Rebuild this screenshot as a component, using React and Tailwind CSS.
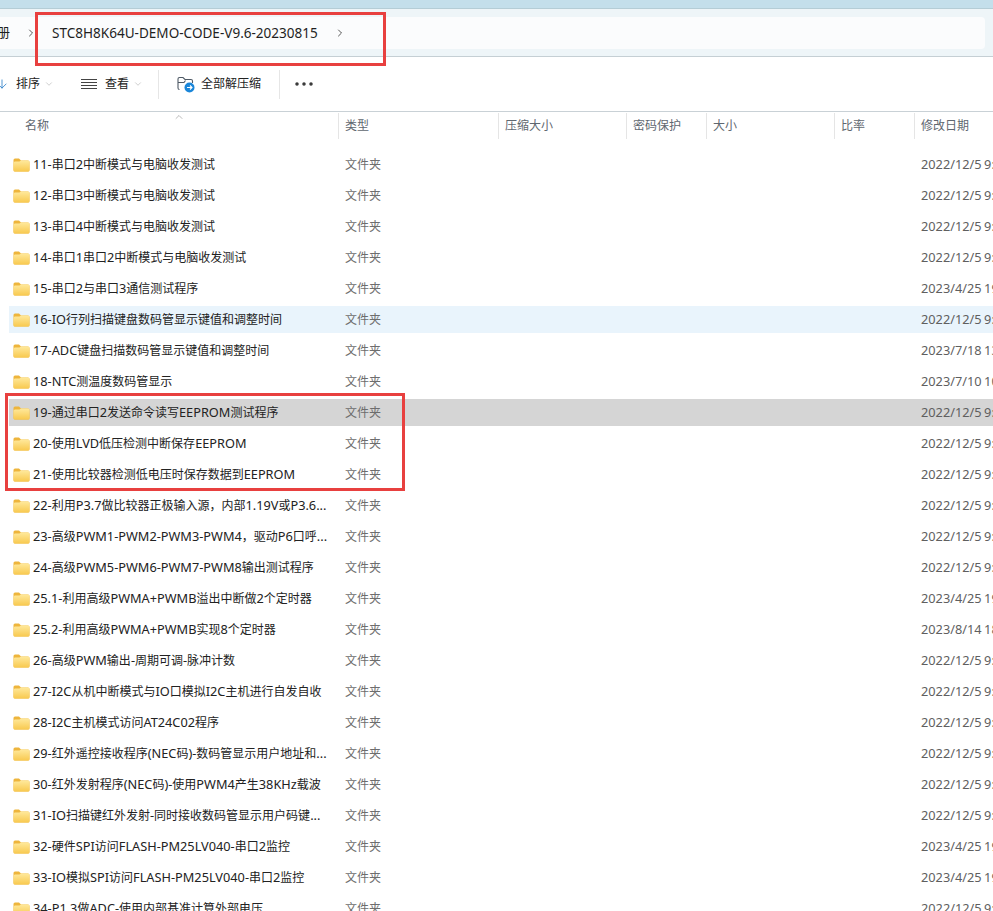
import React from 'react';
import { ChevronRight, ChevronDown, ChevronUp, ArrowDown, Ellipsis } from 'lucide-react';

const rows = [
    ['11-串口2中断模式与电脑收发测试', '2022/12/5 9:30'],
    ['12-串口3中断模式与电脑收发测试', '2022/12/5 9:30'],
    ['13-串口4中断模式与电脑收发测试', '2022/12/5 9:30'],
    ['14-串口1串口2中断模式与电脑收发测试', '2022/12/5 9:30'],
    ['15-串口2与串口3通信测试程序', '2023/4/25 19:20'],
    ['16-IO行列扫描键盘数码管显示键值和调整时间', '2022/12/5 9:30', 'hover'],
    ['17-ADC键盘扫描数码管显示键值和调整时间', '2023/7/18 13:10'],
    ['18-NTC测温度数码管显示', '2023/7/10 10:10'],
    ['19-通过串口2发送命令读写EEPROM测试程序', '2022/12/5 9:30', 'selected'],
    ['20-使用LVD低压检测中断保存EEPROM', '2022/12/5 9:30'],
    ['21-使用比较器检测低电压时保存数据到EEPROM', '2022/12/5 9:30'],
    ['22-利用P3.7做比较器正极输入源，内部1.19V或P3.6...', '2022/12/5 9:30'],
    ['23-高级PWM1-PWM2-PWM3-PWM4，驱动P6口呼...', '2022/12/5 9:30'],
    ['24-高级PWM5-PWM6-PWM7-PWM8输出测试程序', '2022/12/5 9:30'],
    ['25.1-利用高级PWMA+PWMB溢出中断做2个定时器', '2023/4/25 19:20'],
    ['25.2-利用高级PWMA+PWMB实现8个定时器', '2023/8/14 18:10'],
    ['26-高级PWM输出-周期可调-脉冲计数', '2022/12/5 9:30'],
    ['27-I2C从机中断模式与IO口模拟I2C主机进行自发自收', '2022/12/5 9:30'],
    ['28-I2C主机模式访问AT24C02程序', '2022/12/5 9:30'],
    ['29-红外遥控接收程序(NEC码)-数码管显示用户地址和...', '2022/12/5 9:30'],
    ['30-红外发射程序(NEC码)-使用PWM4产生38KHz载波', '2022/12/5 9:30'],
    ['31-IO扫描键红外发射-同时接收数码管显示用户码键...', '2022/12/5 9:30'],
    ['32-硬件SPI访问FLASH-PM25LV040-串口2监控', '2023/4/25 19:20'],
    ['33-IO模拟SPI访问FLASH-PM25LV040-串口2监控', '2023/4/25 19:20'],
    ['34-P1.3做ADC-使用内部基准计算外部电压', '2022/12/5 9:30'],
];

const columns = [
    ['类型', 'w-[160px]'],
    ['压缩大小', 'w-[128px]'],
    ['密码保护', 'w-[80px]'],
    ['大小', 'w-[128px]'],
    ['比率', 'w-[80px]'],
    ['修改日期', 'flex-1'],
];

const FolderIcon = () => (
    <svg width="17" height="14" viewBox="0 0 17 14" className="shrink-0">
        <defs>
            <linearGradient id="folderFront" x1="0" y1="0" x2="0" y2="1">
                <stop offset="0" stopColor="#ffe99c" />
                <stop offset="1" stopColor="#f8c94f" />
            </linearGradient>
        </defs>
        <path d="M0.5 2 Q0.5 0.5 2 0.5 H6 L8 2.5 H15 Q16.5 2.5 16.5 4 V12 Q16.5 13.5 15 13.5 H2 Q0.5 13.5 0.5 12 Z" fill="#eeb53c" />
        <path d="M0.5 5 Q0.5 3.5 2 3.5 H6.5 L8 2.5 H15 Q16.5 2.5 16.5 4 V12 Q16.5 13.5 15 13.5 H2 Q0.5 13.5 0.5 12 Z" fill="url(#folderFront)" />
    </svg>
);

const ExtractIcon = () => (
    <svg width="18" height="17" viewBox="0 0 18 17" fill="none" className="shrink-0">
        <path d="M2.5 13.5 Q1 13.5 1 12 V3 Q1 1.5 2.5 1.5 H6 L8 3.5 H14 Q15.5 3.5 15.5 5 V7" stroke="#4f5a66" strokeWidth="1.1" />
        <path d="M1 6.5 H7 L8.5 4.5" stroke="#4f5a66" strokeWidth="1.1" />
        <circle cx="12.5" cy="11.5" r="5" fill="#1a86d9" />
        <path d="M10 11.5 H15 M13 9.5 L15 11.5 L13 13.5" stroke="#fff" strokeWidth="1.1" />
    </svg>
);

const ListIcon = () => (
    <svg width="16" height="11" viewBox="0 0 16 11" fill="none" stroke="#444444" strokeWidth="1" className="shrink-0">
        <path d="M0 0.5 H16 M0 3.5 H16 M0 6.5 H16 M0 9.5 H16" />
    </svg>
);

// latin runs look a bit bigger than the chinese in the screenshot
const MixedText = ({ text }) => {
    const parts = text.match(/[\x00-\x7f]+|[^\x00-\x7f]+/g);
    return parts.map((part, i) => (
        /[\x00-\x7f]/.test(part[0])
            ? <span key={i} className="text-[12.75px]">{part}</span>
            : <span key={i}>{part}</span>
    ));
};

const Row = ({ name, date, state }) => {
    let bg = '';
    if (state === 'hover') bg = 'bg-[#e9f4fc]';
    if (state === 'selected') bg = 'bg-[#d5d5d5]';
    return (
        <div className={`flex h-[27px] items-center ${bg}`}>
            <div className="flex w-[336px] items-center gap-[3px] pl-1 shrink-0">
                <FolderIcon />
                <span className="whitespace-nowrap text-[#222222]"><MixedText text={name} /></span>
            </div>
            <span className="text-[#6d6d6d]">文件夹</span>
            <span className="ml-auto w-[72px] shrink-0 whitespace-nowrap overflow-hidden text-[12.75px] [word-spacing:-0.75px] text-[#5f5f5f]">{date}</span>
        </div>
    );
};

const App = () => {
    return (
        <div className="relative h-[911px] w-[993px] overflow-hidden bg-white font-['Noto_Sans','Noto_Sans_CJK_SC',sans-serif] text-xs">
            <div className="h-[9px] bg-[#c4dfeb] border-b border-[#b5cdd6]" />

            <div className="h-[48px] border-b border-[#c5cfd4] bg-[#eef5f8] pr-2 pt-2">
                <div className="flex h-8 items-center rounded-r bg-[#fbfcfd] text-[#1f1f1f]">
                    <span className="-ml-[3px] w-[13px] text-[13px] whitespace-nowrap">册</span>
                    <ChevronRight size={12} strokeWidth={1.5} className="ml-[15px] text-[#222222]" />
                    <span className="ml-[15px] text-[13.55px] whitespace-nowrap">STC8H8K64U-DEMO-CODE-V9.6-20230815</span>
                    <ChevronRight size={12} strokeWidth={1.5} className="ml-[16px] text-[#222222]" />
                </div>
            </div>

            <div className="flex h-[54px] items-center text-[#222222]">
                <ArrowDown size={14} strokeWidth={1.3} className="-ml-[5px] text-[#1a74c4]" />
                <span className="ml-[7px]">排序</span>
                <ChevronDown size={10} strokeWidth={1} className="ml-[4px] text-[#8a8a8a]" />
                <div className="ml-[27px]"><ListIcon /></div>
                <span className="ml-[8px]">查看</span>
                <ChevronDown size={10} strokeWidth={1} className="ml-[4px] text-[#8a8a8a]" />
                <div className="ml-[15px] h-[29px] w-px bg-[#e6e6e6]" />
                <div className="ml-[18px]"><ExtractIcon /></div>
                <span className="ml-[6px]">全部解压缩</span>
                <div className="ml-[18px] h-[29px] w-px bg-[#e6e6e6]" />
                <Ellipsis size={24} strokeWidth={1.5} className="ml-[12px] text-[#333333]" />
            </div>

            <div className="relative flex h-[28px] border-t border-[#c9d1d6] pt-px text-[#5f6770]">
                <ChevronUp size={12} strokeWidth={1} className="absolute left-[173px] -top-[1px] text-[#777777]" />
                <div className="flex w-[339px] items-center border-r border-[#e5e5e5] pl-[25px]">名称</div>
                {columns.map(([label, width]) => (
                    <div key={label} className={`flex ${width} items-center border-r border-[#e5e5e5] pl-[6px] last:border-r-0`}>
                        {label}
                    </div>
                ))}
            </div>

            <div className="ml-[9px] mt-[12px] flex flex-col gap-1">
                {rows.map(([name, date, state]) => (
                    <Row key={name} name={name} date={date} state={state} />
                ))}
            </div>

            <div className="absolute left-[35px] top-[12px] h-[54px] w-[351px] border-[3px] border-[#e8403f]" />
            <div className="absolute left-[5px] top-[393px] h-[98px] w-[400px] border-[3px] border-[#e8403f]" />
        </div>
    );
};

export default App;
